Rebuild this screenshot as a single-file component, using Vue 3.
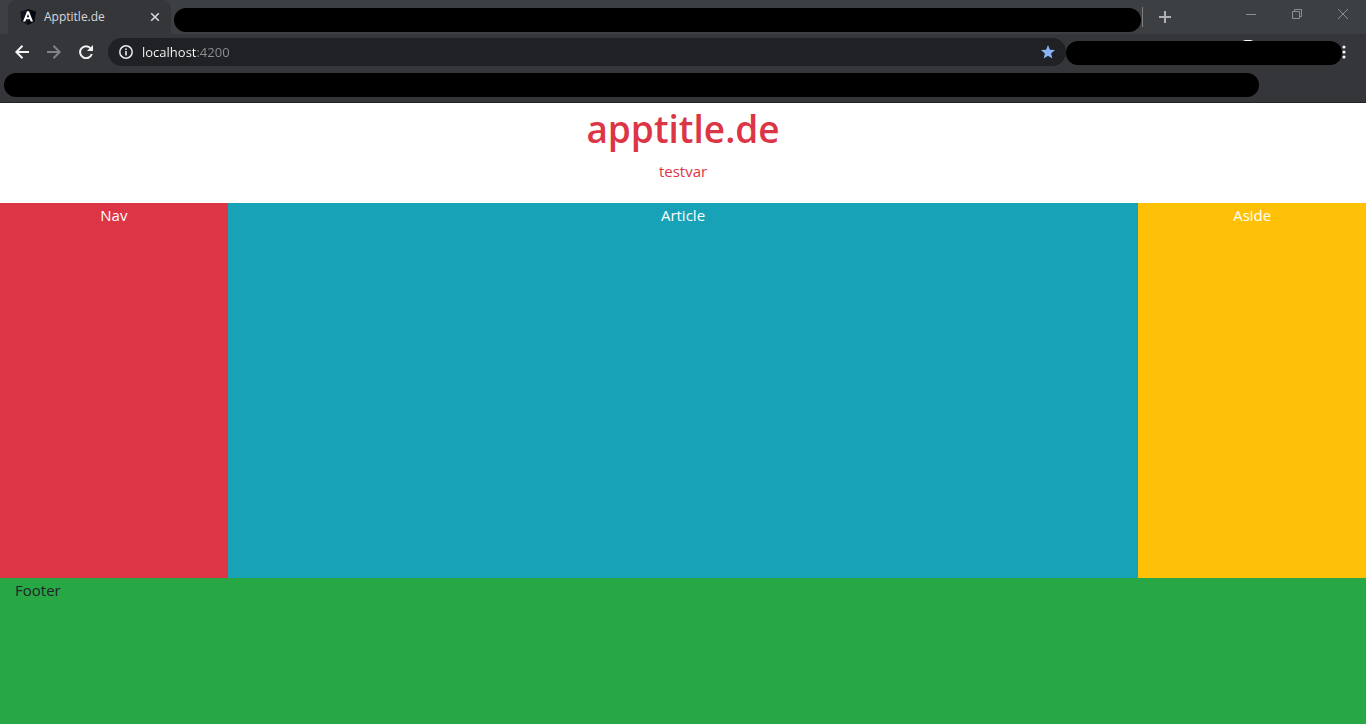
<script setup>
import { ref } from 'vue'

const address = ref('localhost:4200')
</script>

<template>
  <div class="window">
    <header class="browser">
      <div class="tabstrip">
        <div class="tab">
          <svg class="favicon" width="16" height="16" viewBox="0 0 16 16" aria-hidden="true">
            <path d="M8 0 15.800 2.700 14.600 12.600 8 16 1.400 12.600.2 2.700Z" fill="#0e131d" />
            <path d="M8 0 15.800 2.700 14.600 12.600 8 16Z" fill="#060910" />
            <path d="M7 2.200h2L13 12.400h-2.300l-.8-2.200H6.100l-.8 2.200H3ZM8 4.900 6.800 8.300h2.400Z" fill="#fff" fill-rule="evenodd" />
          </svg>
          <span class="tab-title">Apptitle.de</span>
          <button class="icon-button tab-close" type="button" aria-label="Close tab">
            <svg width="10" height="10" viewBox="0 0 10 10"><path d="m1.200 1.200 7.600 7.600m0-7.600L1.200 8.800" stroke="#d5d7da" stroke-width="1.600" /></svg>
          </button>
        </div>
        <div class="redacted redacted-tabs"></div>
        <div class="divider"></div>
        <button class="icon-button new-tab" type="button" aria-label="New tab">
          <svg width="12" height="12" viewBox="0 0 12 12"><path d="M6 0v12M0 6h12" stroke="#aeb0b3" stroke-width="2" /></svg>
        </button>
        <div class="window-controls">
          <button class="icon-button" type="button" aria-label="Minimize">
            <svg width="10" height="10" viewBox="0 0 10 10"><path d="M0 5.500h10" stroke="#8c8e90" /></svg>
          </button>
          <button class="icon-button" type="button" aria-label="Restore">
            <svg width="10" height="10" viewBox="0 0 10 10" fill="none" stroke="#8c8e90"><path d="M.5 2.500h7v7h-7zM2.500 2.500v-2h7v7h-2" /></svg>
          </button>
          <button class="icon-button" type="button" aria-label="Close window">
            <svg width="10" height="10" viewBox="0 0 10 10"><path d="m0 0 10 10M10 0 0 10" stroke="#8c8e90" /></svg>
          </button>
        </div>
      </div>

      <div class="toolbar">
        <button class="icon-button nav-button" type="button" aria-label="Back">
          <svg width="14" height="14" viewBox="0 0 14 14" fill="none" stroke="#f1f3f4" stroke-width="2"><path d="M14 7H1.500M7.500.7 1.300 7l6.200 6.300" /></svg>
        </button>
        <button class="icon-button nav-button" type="button" aria-label="Forward">
          <svg width="14" height="14" viewBox="0 0 14 14" fill="none" stroke="#828386" stroke-width="2"><path d="M0 7h12.500M6.500.7 12.700 7l-6.200 6.300" /></svg>
        </button>
        <button class="icon-button nav-button" type="button" aria-label="Reload">
          <svg width="14" height="14" viewBox="0 0 14 14"><path d="M11.700 3.300A6 6 0 1 0 12.800 9" fill="none" stroke="#f1f3f4" stroke-width="2" /><path d="M14 0v6H8Z" fill="#f1f3f4" /></svg>
        </button>
        <div class="omnibox">
          <svg width="14" height="14" viewBox="0 0 14 14" fill="none" stroke="#e8eaed" aria-hidden="true">
            <circle cx="7" cy="7" r="6.200" stroke-width="1.500" />
            <path d="M7 6v4.500M7 3.500V5" stroke-width="1.600" />
          </svg>
          <input v-model="address" class="address" type="text" aria-label="Address" spellcheck="false" />
          <button class="icon-button" type="button" aria-label="Edit bookmark">
            <svg width="14" height="14" viewBox="0 0 14 14"><path d="m7 0 1.900 4.700 5.100.4-3.900 3.300 1.200 5L7 10.700 2.700 13.400l1.200-5L0 5.100l5.100-.4Z" fill="#8ab4f8" /></svg>
          </button>
        </div>
        <div class="extensions">
          <span class="avatar"></span>
          <div class="redacted"></div>
        </div>
        <button class="icon-button menu" type="button" aria-label="Menu">
          <svg width="4" height="14" viewBox="0 0 4 14" fill="#f1f3f4"><circle cx="2" cy="2" r="1.600" /><circle cx="2" cy="7" r="1.600" /><circle cx="2" cy="12" r="1.600" /></svg>
        </button>
      </div>

      <div class="bookmarks">
        <div class="redacted"></div>
      </div>
    </header>

    <div class="page">
      <header class="page-header">
        <h1>apptitle.de</h1>
        <p>testvar</p>
      </header>
      <div class="columns">
        <nav>Nav</nav>
        <article>Article</article>
        <aside>Aside</aside>
      </div>
      <footer>Footer</footer>
    </div>
  </div>
</template>

<style>
body {
  margin: 0;
}
</style>

<style scoped>
* {
  box-sizing: border-box;
}

.window {
  display: flex;
  flex-direction: column;
  min-height: 100vh;
  font-family: "Segoe UI", "Open Sans", "Noto Sans", sans-serif;
}

svg {
  display: block;
  flex: none;
}

.icon-button {
  display: flex;
  align-items: center;
  justify-content: center;
  flex: none;
  padding: 0;
  border: 0;
  background: none;
}

.redacted {
  height: 24px;
  border-radius: 12px;
  background: #000;
}

.browser {
  background: #35363a;
  border-bottom: 1px solid #232326;
}

.tabstrip {
  display: flex;
  align-items: center;
  height: 34px;
  padding-left: 8px;
  background: #3c4043;
}

.tab {
  display: flex;
  align-items: center;
  align-self: stretch;
  width: 163px;
  padding: 0 11px 0 12px;
  border-radius: 8px 8px 0 0;
  background: #35363a;
}

.tab-title {
  flex: 1;
  padding-left: 8px;
  color: #d5d7da;
  font-size: 12px;
  line-height: 16px;
}

.redacted-tabs {
  flex: 1;
  margin: 5px 1px 0 3px;
}

.divider {
  width: 1px;
  height: 20px;
  background: #7b7e81;
}

.new-tab {
  width: 44px;
  height: 34px;
}

.window-controls {
  display: flex;
  align-self: flex-start;
  margin-left: 41px;
}

.window-controls .icon-button {
  width: 46px;
  height: 28px;
}

.toolbar {
  display: flex;
  align-items: center;
  height: 36px;
  padding: 0 20px 0 6px;
}

.nav-button {
  width: 32px;
  height: 28px;
}

.omnibox {
  display: flex;
  align-items: center;
  flex: 1;
  height: 28px;
  margin-left: 6px;
  padding: 0 11px;
  border-radius: 14px;
  background: #202124;
}

.address {
  flex: 1;
  min-width: 0;
  margin: 0 9px;
  padding: 0;
  border: 0;
  outline: 0;
  background: linear-gradient(to right, #fff 55px, #8d8f92 55px) text;
  color: transparent;
  caret-color: #fff;
  font: 13px/20px "Segoe UI", "Open Sans", "Noto Sans", sans-serif;
}

.extensions {
  position: relative;
  width: 276px;
  padding-top: 2px;
}

.avatar {
  position: absolute;
  top: 1px;
  left: 176px;
  width: 12px;
  height: 12px;
  border-radius: 4px 4px 0 0;
  background: #fff;
}

.extensions .redacted {
  position: relative;
}

.menu {
  width: 4px;
  height: 28px;
}

.bookmarks {
  height: 32px;
  padding: 3px 107px 0 4px;
}

.page {
  display: flex;
  flex: 1;
  flex-direction: column;
  color: #212529;
  background: #fff;
  font-size: 15px;
  line-height: 24px;
}

.page-header {
  height: 100px;
  padding-top: 2px;
  color: #dc3545;
  text-align: center;
}

h1 {
  margin: 0 0 6px;
  font-size: 37px;
  font-weight: 600;
  line-height: 48px;
}

p {
  margin: 0;
}

.columns {
  display: grid;
  grid-template-columns: 2fr 8fr 2fr;
  min-height: 375px;
  color: #fff;
  text-align: center;
}

nav {
  background: #dc3545;
}

article {
  background: #17a2b8;
}

aside {
  background: #ffc107;
}

footer {
  flex: 1;
  padding: 0 15px;
  background: #28a745;
}
</style>
